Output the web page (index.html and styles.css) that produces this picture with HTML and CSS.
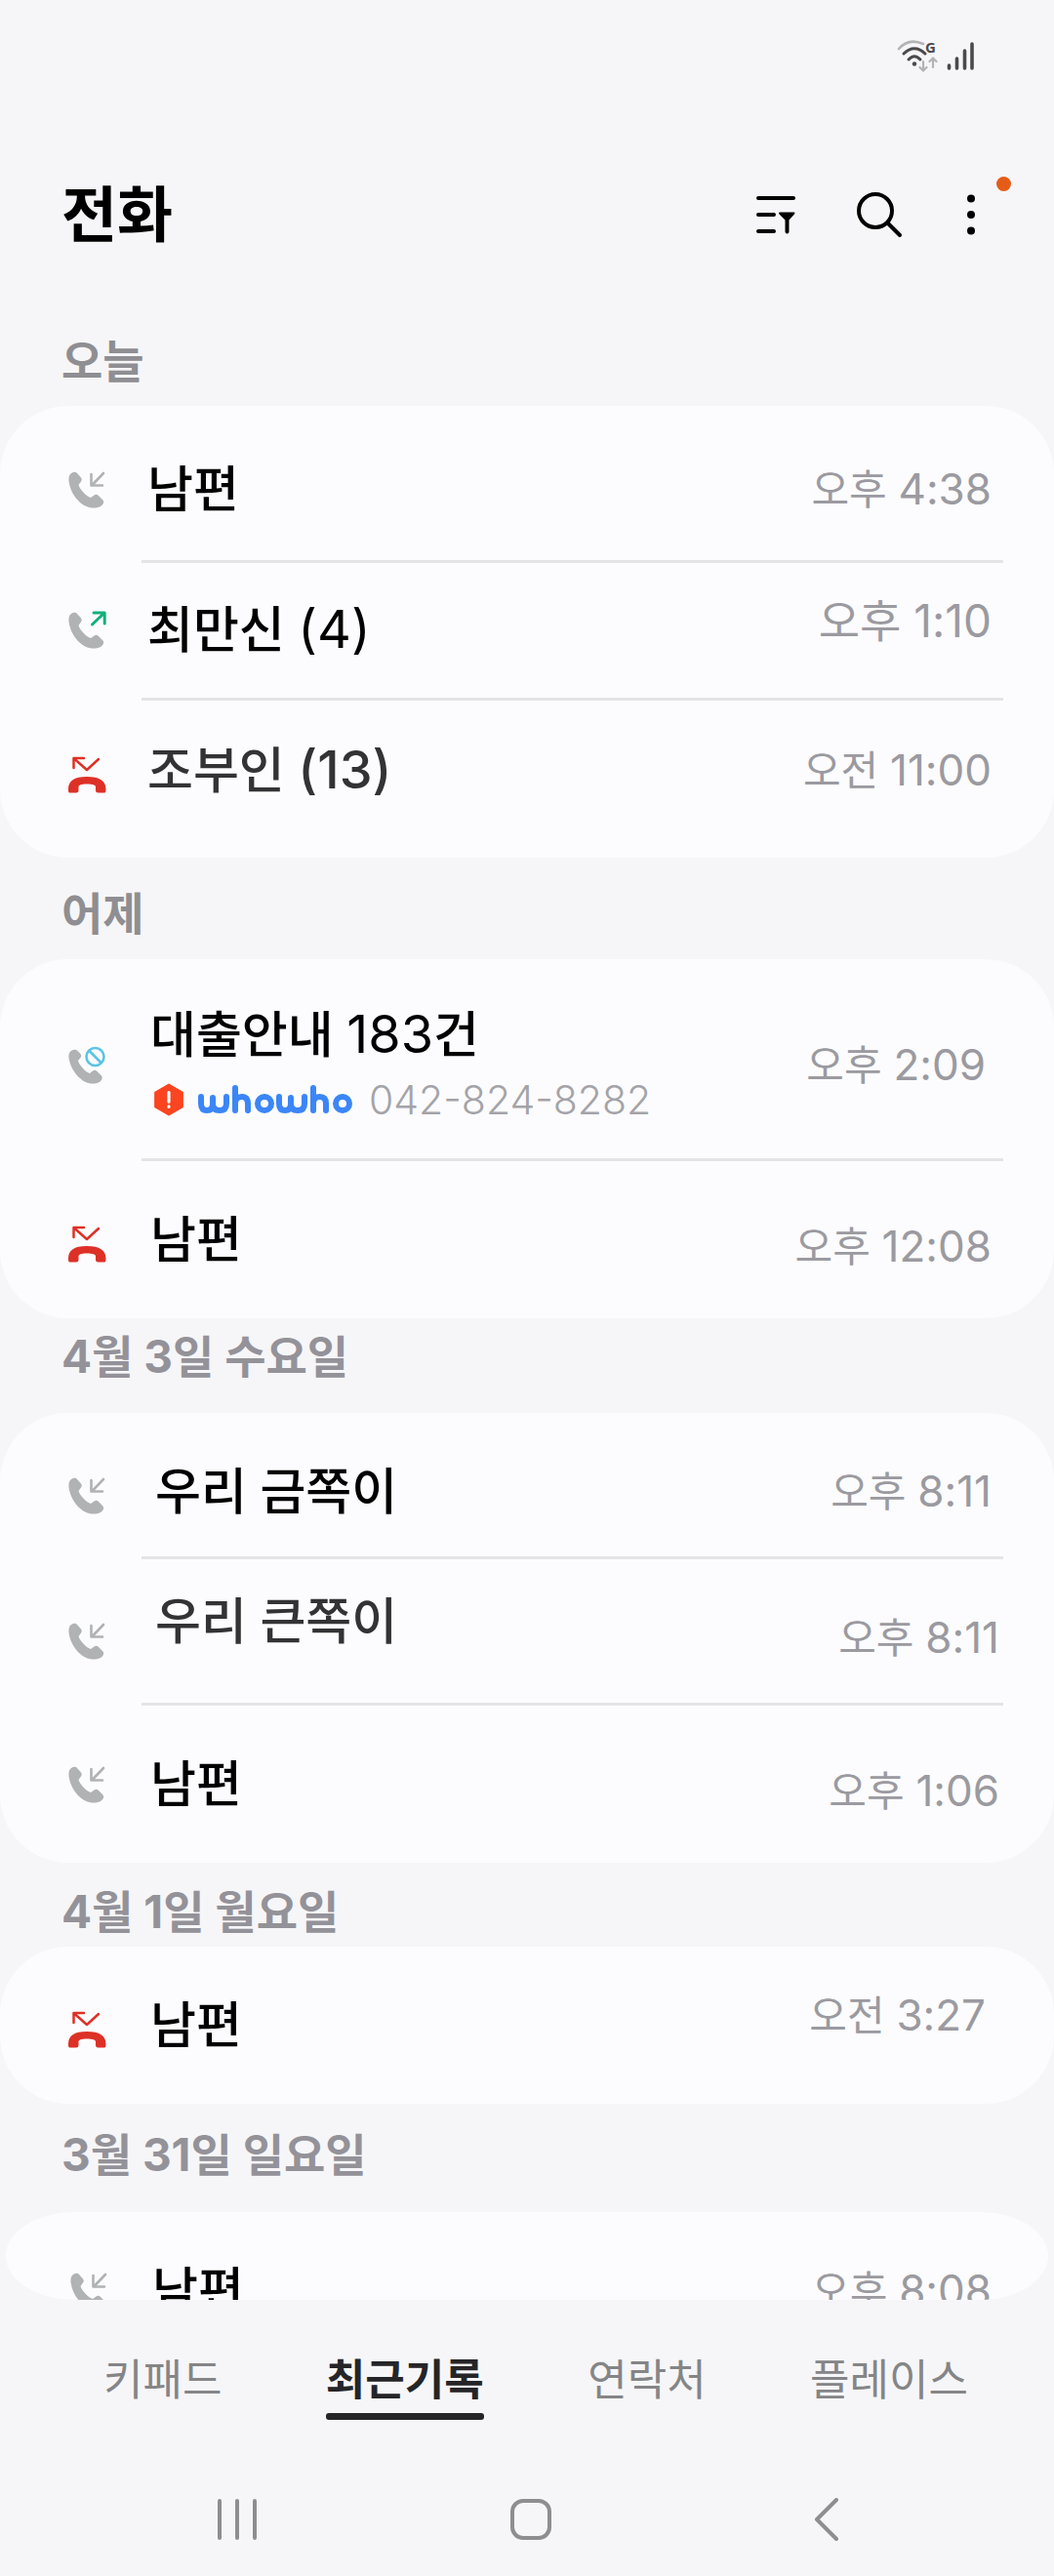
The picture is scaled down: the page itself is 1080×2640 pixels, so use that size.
FILE: index.html
```html
<!DOCTYPE html>
<html lang="ko">
<head>
<meta charset="utf-8">
<meta name="viewport" content="width=device-width, initial-scale=1">
<title>전화</title>
<link rel="stylesheet" href="styles.css">
</head>
<body>
<svg class="sprite" aria-hidden="true">
  <symbol id="incoming" viewBox="0 0 40 40">
    <path d="M6 2C2.500 3 1 6 1.500 11C3 24 13 37 25 38.500C31 39 36 37 37 33.500C37.400 32 37 31 36 30L32 26C30.500 24.300 29 24.300 27.500 25.500L24 28C20 27 12.500 19.500 11.500 15L14 11.500C15 10 15 8.700 14 7.500L10 3C9 1.700 7.500 1.500 6 2Z" fill="#b0b2b3"/>
    <path d="M37 3L25.500 15M24.500 4V15.500H36" fill="none" stroke="#b0b2b3" stroke-width="2.600" stroke-linecap="round" stroke-linejoin="round"/>
  </symbol>
  <symbol id="outgoing" viewBox="0 0 40 40">
    <path d="M6 2C2.500 3 1 6 1.500 11C3 24 13 37 25 38.500C31 39 36 37 37 33.500C37.400 32 37 31 36 30L32 26C30.500 24.300 29 24.300 27.500 25.500L24 28C20 27 12.500 19.500 11.500 15L14 11.500C15 10 15 8.700 14 7.500L10 3C9 1.700 7.500 1.500 6 2Z" fill="#b0b2b3"/>
    <path d="M25.500 14L37.500 2.500M27 2H38.200V13" fill="none" stroke="#12b07a" stroke-width="3" stroke-linecap="round" stroke-linejoin="round"/>
  </symbol>
  <symbol id="blocked" viewBox="0 0 40 40">
    <path d="M6 4C2.500 5 1 7.500 1.500 12C3 24 13 37 24 38.500C30 39 35 37 35.500 33.500C36 32 35.500 31 34.500 30L30.500 26C29 24.300 27.500 24.300 26 25.500L23 28C19 27 12 19.500 11 15L13.500 12C14.500 10.500 14.500 9.500 13.500 8L10 4.500C9 3.500 7.500 3.500 6 4Z" fill="#b0b2b3"/>
    <circle cx="28.500" cy="11" r="9" fill="none" stroke="#5cc3e6" stroke-width="2.600"/>
    <path d="M22.500 5L34.500 17" stroke="#5cc3e6" stroke-width="2.600"/>
  </symbol>
  <symbol id="missed" viewBox="0 0 40 40">
    <path d="M6.500 13V3H17M7 3.500L20 15L32 4" fill="none" stroke="#dd3127" stroke-width="2.500" stroke-linecap="round" stroke-linejoin="round"/>
    <path d="M1 35C1 26 7 22 20 22S39.500 26 39.500 35C39.500 38 39 38.500 37 38.500H32C29.500 38.500 29 37.500 29 35.500V32.500C29 30.500 26 29.500 20 29.500S11.500 30.500 11.500 32.500V35.500C11.500 37.500 11 38.500 9 38.500H4C1.500 38.500 1 38 1 35Z" fill="#dd3127"/>
  </symbol>
</svg>

<div class="phone">
  <div class="status">
    <svg width="42" height="34" viewBox="0 0 42 34" aria-label="Wi-Fi">
      <g fill="none" stroke-linecap="round">
        <path d="M2 9C9 1 18 0 27 4" stroke="#b3b3b5" stroke-width="2.600"/>
        <path d="M7 14C14 7 22 7 29 14M12 20C16 15.500 20 15.500 24 20" stroke="#4a4a4c" stroke-width="3"/>
        <path d="M27 22V31M23.500 28L27 31.500L30.500 28M37 28V19M33.500 22L37 18.500L40.500 22" stroke="#b3b3b5" stroke-width="2.200"/>
      </g>
      <circle cx="18" cy="24.500" r="2.200" fill="#4a4a4c"/>
      <text x="29" y="13" class="status-g">G</text>
    </svg>
    <svg width="28" height="34" viewBox="0 0 28 34" aria-label="신호 세기">
      <path d="M2.500 26V29M10.500 19V29M18.500 11V29M26 4V29" stroke="#4a4a4c" stroke-width="3.600" stroke-linecap="round"/>
    </svg>
  </div>

  <header class="bar">
    <h1>전화</h1>
    <button class="tool" aria-label="필터">
      <svg width="44" height="44" viewBox="0 0 44 44"><path d="M4 5H40M4 22H20M4 39H20" stroke="#000" stroke-width="4" stroke-linecap="round"/><path d="M25.500 19.500H41Q42 20.500 41 21.500L35.500 27.500V39.500A1.700 1.700 0 0 1 31.500 39.500V27.500L25.500 21.500Q24.500 20.500 25.500 19.500Z" fill="#000"/></svg>
    </button>
    <button class="tool" aria-label="검색">
      <svg width="48" height="48" viewBox="0 0 48 48"><g fill="none" stroke="#000" stroke-width="4" stroke-linecap="round"><circle cx="20" cy="20" r="17"/><path d="M33 33L45 45"/></g></svg>
    </button>
    <button class="tool tool-more" aria-label="더보기">
      <svg width="10" height="44" viewBox="0 0 10 44"><circle cx="5" cy="5.500" r="4"/><circle cx="5" cy="22" r="4"/><circle cx="5" cy="38.500" r="4"/></svg>
      <span class="badge"></span>
    </button>
  </header>

  <main class="log">
    <h2>오늘</h2>
    <ul class="card card-today">
      <li class="row row-low"><svg class="kind"><use href="#incoming"/></svg><div class="who">남편</div><time>오후 <b>4:38</b></time></li>
      <li class="row row-short"><svg class="kind"><use href="#outgoing"/></svg><div class="who">최만신 <b>(4)</b></div><time class="large up">오후 <b>1:10</b></time></li>
      <li class="row row-high"><svg class="kind drop"><use href="#missed"/></svg><div class="who soft">조부인 <b>(13)</b></div><time>오전 <b>11:00</b></time></li>
    </ul>

    <h2 class="h-yesterday">어제</h2>
    <ul class="card">
      <li class="row row-tall"><svg class="kind"><use href="#blocked"/></svg>
        <div class="who">대출안내 <b>183</b>건
          <div class="spam">
            <svg width="32" height="34" viewBox="0 0 30 32"><path d="M15 1.500L28 9V23L15 30.500L2 23V9Z" fill="#fb4420" stroke="#fb4420" stroke-width="2" stroke-linejoin="round"/><path d="M15 9V18M15 22.500V23" stroke="#fff" stroke-width="3" stroke-linecap="round"/></svg>
            <svg class="brand" width="160" height="32" viewBox="0 0 160 32" role="img" aria-label="whowho"><g fill="none" stroke="#3b86f7" stroke-width="6" stroke-linecap="round" stroke-linejoin="round"><path d="M4 13V20Q4 27 10 27Q16 27 16 20V14M16 20Q16 27 23 27Q30 27 30 20V13M39 4V27M39 20Q39 13 45.500 13Q52 13 52 20V27"/><circle cx="69" cy="20" r="7"/><path d="M84 13V20Q84 27 90 27Q96 27 96 20V14M96 20Q96 27 103 27Q110 27 110 20V13M119 4V27M119 20Q119 13 125.500 13Q132 13 132 20V27"/><circle cx="149" cy="20" r="7"/></g></svg>
            <span>042-824-8282</span>
          </div>
        </div>
        <time class="near">오후 <b>2:09</b></time></li>
      <li class="row"><svg class="kind drop"><use href="#missed"/></svg><div class="who">남편</div><time class="down">오후 <b>12:08</b></time></li>
    </ul>

    <h2 class="h-date h-tight">4월 3일 수요일</h2>
    <ul class="card">
      <li class="row row-mid row-low"><svg class="kind drop"><use href="#incoming"/></svg><div class="who inset">우리 금쪽이</div><time>오후 <b>8:11</b></time></li>
      <li class="row row-mid"><svg class="kind low"><use href="#incoming"/></svg><div class="who inset soft up">우리 큰쪽이</div><time class="down far">오후 <b>8:11</b></time></li>
      <li class="row"><svg class="kind"><use href="#incoming"/></svg><div class="who">남편</div><time class="down far">오후 <b>1:06</b></time></li>
    </ul>

    <h2 class="h-date">4월 1일 월요일</h2>
    <ul class="card">
      <li class="row"><svg class="kind drop"><use href="#missed"/></svg><div class="who">남편</div><time class="up near">오전 <b>3:27</b></time></li>
    </ul>

    <h2 class="h-date h-last">3월 31일 일요일</h2>
    <ul class="card card-cut">
      <li class="row"><svg class="kind"><use href="#incoming"/></svg><div class="who">남편</div><time>오후 <b>8:08</b></time></li>
    </ul>
  </main>

  <nav class="tabs">
    <a href="#keypad">키패드</a>
    <a href="#recent" class="on" aria-current="page">최근기록</a>
    <a href="#contacts">연락처</a>
    <a href="#places">플레이스</a>
  </nav>

  <div class="system">
    <button aria-label="최근 앱"><svg width="44" height="44" viewBox="0 0 44 44"><path d="M4 3V41M22 3V41M40 3V41"/></svg></button>
    <button aria-label="홈"><svg width="44" height="44" viewBox="0 0 44 44"><rect x="3" y="3" width="38" height="38" rx="11"/></svg></button>
    <button aria-label="뒤로"><svg width="44" height="44" viewBox="0 0 44 44"><path d="M34 2L14 22L34 42"/></svg></button>
  </div>
</div>
</body>
</html>
```
FILE: styles.css
```css
* { box-sizing: border-box; }

body {
  margin: 0;
  background: #f6f6f8;
  color: #000;
  font-family: Inter, "Noto Sans CJK KR", sans-serif;
}

.sprite { position: absolute; width: 0; height: 0; }

.phone {
  display: flex;
  flex-direction: column;
  min-height: 100vh;
}

button {
  padding: 0;
  border: 0;
  background: none;
  font: inherit;
}

svg { display: block; }

/* Status bar */
.status {
  display: flex;
  justify-content: flex-end;
  gap: 9px;
  padding: 41px 82px 0 0;
  height: 152px;
}

.status-g {
  font: bold 15px "Noto Sans", sans-serif;
  fill: #4a4a4c;
}

/* Title bar */
.bar {
  display: flex;
  align-items: center;
  height: 136px;
  padding: 0 80px 0 63px;
}

h1 {
  flex: 1;
  margin: 0;
  padding-top: 2px;
  font-size: 62px;
  line-height: 80px;
  font-weight: 700;
}

.tool { margin-left: 60px; }

.tool-more {
  position: relative;
  margin-left: 65px;
}

.badge {
  position: absolute;
  top: -17px;
  right: -36px;
  width: 15px;
  height: 15px;
  border-radius: 50%;
  background: #e65c17;
}

/* Call log */
h2 {
  display: flex;
  align-items: center;
  height: 104px;
  margin: 0;
  padding: 0 0 0 63px;
  color: #8f8e92;
  font-size: 46px;
  line-height: 64px;
  font-weight: 700;
}

.log > h2:first-child { height: 128px; padding-top: 36px; }
.log > .h-yesterday { padding-top: 10px; }
.h-date { height: 86px; padding-top: 14px; color: #949299; }
.h-tight { height: 97px; padding-top: 0; padding-bottom: 20px; }
.h-last { height: 111px; padding-top: 0; padding-bottom: 8px; }

.card {
  margin: 0;
  padding: 0;
  list-style: none;
  border-radius: 70px;
  background: #fcfcfe;
  overflow: hidden;
}

.row {
  position: relative;
  display: flex;
  align-items: center;
  height: 161px;
  padding: 0 64px 0 69px;
}

.row:not(:last-child) {
  margin-bottom: 3px;
}

.row:not(:last-child)::after {
  content: "";
  position: absolute;
  left: 145px;
  right: 52px;
  bottom: -3px;
  height: 3px;
  background: #e4e4e6;
}

.row-short { height: 138px; }
.row-mid { height: 147px; }
.row-tall { height: 204px; padding-top: 14px; }
.row-low { padding-top: 14px; }
.row-high { padding-bottom: 18px; }
.card-today .row:first-child { height: 158px; }

.kind {
  flex: none;
  width: 40px;
  height: 40px;
}

.kind.drop { margin-top: 8px; }
.kind.low { margin-top: 20px; }

.who {
  flex: 1;
  padding-left: 45px;
  font-size: 51px;
  line-height: 64px;
  font-weight: 500;
}

.card-today .who { padding-left: 42px; }
.who.inset { padding-left: 50px; }
.soft { color: #333335; }

.who b { font-size: 54px; line-height: 1; font-weight: 400; }
.soft b { font-weight: 500; }

.up { padding-bottom: 20px; }
.down { padding-top: 14px; }

time {
  color: #9b9aa0;
  font-size: 42px;
  line-height: 56px;
  white-space: nowrap;
}

time b { font-size: 44px; line-height: 1; font-weight: 400; }

.large { font-size: 46px; }
.large b { font-size: 46px; }
.near { margin-right: 6px; }
.far { margin-right: -8px; }

.spam {
  display: flex;
  align-items: center;
  margin-top: 6px;
  padding-left: 3px;
  color: #a4a3a8;
  font-size: 41px;
  line-height: 56px;
  font-weight: 300;
}

.brand { margin: 0 16px 0 13px; }

.card-cut {
  height: 90px;
  margin: 0 6px;
  border-radius: 70px / 45px;
}

.card-cut .row { padding: 0 58px 0 65px; }

/* Bottom tabs */
.tabs {
  display: flex;
  justify-content: space-between;
  padding: 52px 88px 0 106px;
}

.tabs a {
  color: #858587;
  font-size: 44px;
  line-height: 60px;
  text-decoration: none;
}

.tabs a::after {
  content: "";
  display: block;
  height: 7px;
  margin-top: 4px;
  border-radius: 3px;
}

.tabs .on { color: #252527; font-weight: 700; }
.tabs .on::after { background: #252527; }

/* System navigation */
.system {
  display: flex;
  justify-content: space-around;
  margin-top: 80px;
  padding: 0 84px 0 92px;
}

.system svg {
  fill: none;
  stroke: #8e8e90;
  stroke-width: 4;
  stroke-linecap: round;
  stroke-linejoin: round;
}
```
